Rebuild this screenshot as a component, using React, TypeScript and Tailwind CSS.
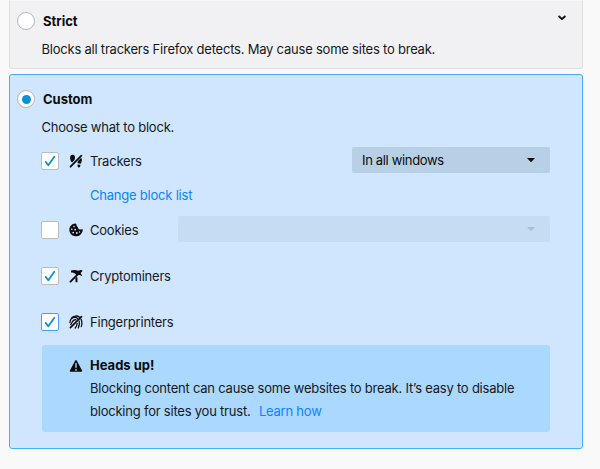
import type { ReactNode } from "react";

function Radio({ checked }: { checked?: boolean }) {
  return (
    <span className="flex size-[18px] shrink-0 items-center justify-center rounded-full border border-[#b5b6ba] bg-white">
      {checked && <span className="size-[9px] rounded-full bg-[#0a91dc]" />}
    </span>
  );
}

function Checkbox({ checked, focused }: { checked?: boolean; focused?: boolean }) {
  return (
    <span
      className={`flex size-[18px] shrink-0 items-center justify-center rounded-[2px] border bg-white ${
        focused ? "border-[#45a1ff]" : "border-[#b9bcc2]"
      }`}
    >
      {checked && (
        <svg viewBox="0 0 16 16" className="size-4" fill="none" stroke="#0a91dc" strokeWidth="1.8" strokeLinecap="round" strokeLinejoin="round">
          <path d="M3.700 8.900 6.300 12.200 12.300 3.700" />
        </svg>
      )}
    </span>
  );
}

function TrackerIcon() {
  return (
    <svg viewBox="0 0 14 14" className="size-3.5" fill="#0c0c0d">
      <path d="M3.500.8C5.200.6 6 2 6 3.500 6 4.800 5.700 5.800 5 6.800L3.400 8.300 2.400 8C1.500 6.700 1.100 5 1.100 3.500 1.100 2 2.100.9 3.500.8Z" />
      <path d="M8.700 5.900 11 3.600C12.300 3.600 13 4.700 12.900 6.100 12.800 7.500 12.400 8.700 11.800 9.800L8.700 9.300C8.400 8 8.400 7 8.700 5.900Z" />
      <path d="M8.600 10.400 11.400 10.800C11.400 12.400 10.900 13.500 9.800 13.400 8.800 13.300 8.400 12.300 8.600 10.400Z" />
      <path d="M1.500 12.700 12.400 1.600" stroke="#cfe6fe" strokeWidth="2.800" />
      <path d="M1.500 12.700 12.400 1.600" stroke="#0c0c0d" strokeWidth="1.800" strokeLinecap="round" />
    </svg>
  );
}

function CookieIcon() {
  return (
    <svg viewBox="0 0 14 14" className="size-3.5">
      <path
        fill="#0c0c0d"
        d="M6.300.4C7.600.4 7.300 1.800 7.700 2.700 8.100 3.700 9 3.800 9 4.800 9.100 6.100 10 6.500 11 6.500 12 6.700 12.300 5.800 13.500 6.300 14 6.700 13.500 8.400 13.100 9.300A6.700 6.700 0 0 1 .3 7C.3 3.500 3 .5 6.300.4Z"
      />
      <g fill="#cfe6fe">
        <circle cx="5" cy="3.500" r=".8" />
        <circle cx="2.800" cy="6.300" r=".8" />
        <circle cx="6.200" cy="6.600" r=".9" />
        <circle cx="4.200" cy="9.600" r=".9" />
        <circle cx="7.800" cy="10" r=".9" />
        <circle cx="10.500" cy="9" r=".7" />
      </g>
    </svg>
  );
}

function CryptominerIcon() {
  return (
    <svg viewBox="0 0 14 14" className="size-3.5">
      <path fill="#0c0c0d" d="M2 1.500C4.500.8 7 .8 9 1.700L11 1.300 13 1.500 11.500 4C12.300 4.800 12.900 6 13 7.300 11.500 6 10 5.700 8.800 6L7.500 6 6.500 5C5 4 3.600 3.600 2 3.600Z" />
      <path fill="#0c0c0d" d="M6.400 9.200 8 7.700 8.500 9.500 8.400 13.200H6.600Z" />
      <path d="M1.500 12.700 12.300 1.900" stroke="#0c0c0d" strokeWidth="1.900" strokeLinecap="round" />
    </svg>
  );
}

function FingerprintIcon() {
  return (
    <svg viewBox="0 0 14 14" className="size-3.5" fill="none" stroke="#0c0c0d" strokeLinecap="round">
      <g strokeWidth="1.250">
        <path d="M2.400 3.200C4.300.5 8.500.4 10.600 2.300" />
        <path d="M1 7.700C1.100 2.200 6.500 1.300 8.700 3.600" />
        <path d="M1.700 9.700C3.500 8.200 2.500 4.600 6.900 4.600" />
        <path d="M12 4.100C13.100 6.300 13.100 9 12.300 11.600" />
        <path d="M10.300 6.200C10.600 8.500 10.200 10.900 9.300 12.900" />
        <path d="M8.200 8.300C8 10.200 7.300 11.700 6.200 13" />
      </g>
      <path d="M1.400 12.700 12.500 1.600" strokeWidth="1.700" />
    </svg>
  );
}

function WarningIcon() {
  return (
    <svg viewBox="0 0 14 14" className="size-3.5">
      <path d="M7 2 12.300 12H1.700Z" fill="#0c0c0d" stroke="#0c0c0d" strokeWidth="1.700" strokeLinejoin="round" />
      <path d="M7 4.500V8.300M7 10.500V11.200" stroke="#abd8ff" strokeWidth="1.400" strokeLinecap="round" />
    </svg>
  );
}

function Select({ label, className }: { label?: string; className: string }) {
  return (
    <div className={`ml-auto flex h-[26px] items-center justify-between rounded-[2px] pr-[15px] pl-2.5 tracking-[-0.34px] ${className}`}>
      <span>{label}</span>
      <svg viewBox="0 0 8 4" className="h-1 w-2" fill="currentColor">
        <path d="M0 0H8L4.500 3.700Q4 4.200 3.500 3.700Z" />
      </svg>
    </div>
  );
}

function Option({ icon, label, checked, focused, className = "", children }: {
  icon: ReactNode;
  label: string;
  checked?: boolean;
  focused?: boolean;
  className?: string;
  children?: ReactNode;
}) {
  return (
    <div className={`-ml-px flex h-[26px] items-center ${className}`}>
      <Checkbox checked={checked} focused={focused} />
      <span className="ml-[10px] flex">{icon}</span>
      <span className="ml-[7px]">{label}</span>
      {children}
    </div>
  );
}

export default function App() {
  return (
    <div className="h-[469px] w-[600px] overflow-hidden bg-[#f9f9fa] pl-[9px] font-['Inter','Liberation_Sans',sans-serif] text-[13px] leading-5 tracking-[-0.22px] text-[#16191d]">
      <section className="h-[69px] w-[574px] rounded-b-[3px] border border-[#dfdfe2] border-t-[#f7f7f8] bg-[#f1f1f3] pt-2.5 pr-4 pl-[7px]">
        <div className="flex h-5 items-center">
          <Radio />
          <h2 className="ml-2 font-bold tracking-normal text-[#0c0c0d]">Strict</h2>
          <svg viewBox="0 0 8 6" className="mt-[-7px] ml-auto h-1.5 w-2" fill="none" stroke="#0c0c0d" strokeWidth="1.900" strokeLinecap="round" strokeLinejoin="round">
            <path d="M1.200 1.500 4 4.100 6.800 1.500" />
          </svg>
        </div>
        <p className="mt-2 ml-[24.5px]">Blocks all trackers Firefox detects. May cause some sites to break.</p>
      </section>

      <section className="mt-[5px] h-[375px] w-[574px] rounded-[3px] border border-[#45b1fb] bg-[#cfe6fe] pt-3.5 pr-8 pl-[7px]">
        <div className="flex h-5 items-center">
          <Radio checked />
          <h2 className="ml-2 font-bold tracking-normal text-[#0c0c0d]">Custom</h2>
        </div>
        <div className="ml-[25px]">
          <p className="mt-2 -ml-[0.5px]">Choose what to block.</p>
          <Option className="mt-[11px]" icon={<TrackerIcon />} label="Trackers" checked>
            <Select label="In all windows" className="mt-[-3px] w-[198px] bg-[#b8d0e6] text-[#0c0c0d]" />
          </Option>
          <a className="mt-[11px] ml-12 block text-[#0a84ff]">Change block list</a>
          <Option className="mt-3" icon={<CookieIcon />} label="Cookies">
            <Select className="mt-[-3px] w-[372px] bg-[#c6dcf3] text-[#a9bfd5]" />
          </Option>
          <Option className="mt-5" icon={<CryptominerIcon />} label="Cryptominers" checked />
          <Option className="mt-5" icon={<FingerprintIcon />} label="Fingerprinters" checked focused />
          <div className="mt-[10px] flex h-[87px] rounded-[3px] bg-[#abd8ff] pt-[9px] pl-[27px]">
            <span className="mt-[5px]">
              <WarningIcon />
            </span>
            <div className="ml-[7px] leading-[23px]">
              <h3 className="font-bold tracking-normal text-[#0c0c0d]">Heads up!</h3>
              <p>
                Blocking content can cause some websites to break. It’s easy to disable
                <br />
                blocking for sites you trust. <a className="ml-[5px] text-[#0a84ff]">Learn how</a>
              </p>
            </div>
          </div>
        </div>
      </section>
    </div>
  );
}
